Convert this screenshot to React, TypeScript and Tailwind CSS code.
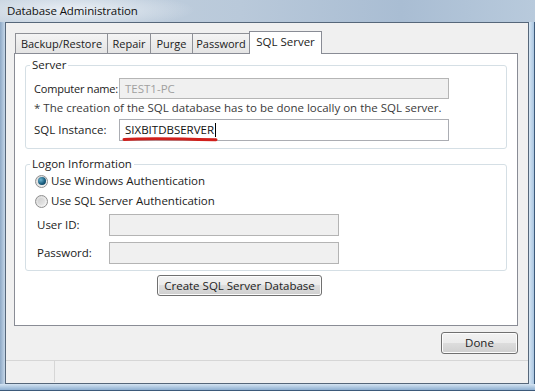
import React from "react";

function Radio({ checked }: { checked: boolean }) {
  return (
    <span className="relative w-[13px] h-[13px] rounded-full border border-[#8f8f8f] bg-[linear-gradient(135deg,#d8d8d8,#f6f6f6)] flex items-center justify-center shrink-0">
      {checked ? (
        <span className="w-[8px] h-[8px] rounded-full bg-[radial-gradient(circle_at_35%_35%,#6fb6d2,#1b5f80_55%,#0a3048)]" />
      ) : (
        <span className="w-[7px] h-[7px] rounded-full bg-[linear-gradient(135deg,#cfcfcf,#e9e9e9)]" />
      )}
    </span>
  );
}

function Tab({ label, w, selected, first }: { label: string; w: string; selected?: boolean; first?: boolean }) {
  if (selected) {
    return (
      <div
        className={`${w} h-[23px] -mb-px -ml-px relative z-10 bg-white border border-b-0 border-[#898c95] flex items-start justify-center pt-[2px] leading-[16px] whitespace-nowrap text-[11.5px]`}
      >
        {label}
      </div>
    );
  }
  return (
    <div
      className={`${w} h-[20px] ${first ? "" : "-ml-px"} border border-b-0 border-[#8e9096] bg-[linear-gradient(#f4f4f4,#e4e4e4)] flex items-center justify-center leading-[16px] pt-[1px] whitespace-nowrap text-[11px]`}
    >
      {label}
    </div>
  );
}

function VistaButton({ children, className }: { children: React.ReactNode; className: string }) {
  return (
    <div
      className={`${className} rounded-[3px] border border-[#707070] shadow-[inset_0_0_0_1px_#fcfcfc] bg-[linear-gradient(#f2f2f2,#ebebeb_50%,#dddddd_50%,#cfcfcf)] flex items-center justify-center leading-[16px] text-[#222] whitespace-nowrap`}
    >
      {children}
    </div>
  );
}

export default function App() {
  return (
    <div className="w-[535px] h-[391px] overflow-hidden flex flex-col font-['Open_Sans',sans-serif] text-[11.5px] leading-[16px] text-[#1b1b1b] bg-[#b3c6da]">
      {/* Title bar */}
      <div className="h-[22px] shrink-0 flex items-center pl-[7px] bg-[radial-gradient(ellipse_120px_18px_at_75px_10px,rgba(236,241,246,0.95),rgba(236,241,246,0)),linear-gradient(to_right,#c5d2df,#b9c9da_45%,#a9bdd3_75%,#b8cadc)]">
        <span className="text-[#111] text-[11.5px] tracking-[-0.1px] whitespace-nowrap">Database Administration</span>
      </div>

      <div className="h-[362px] flex shrink-0">
        {/* left frame */}
        <div className="w-[5px] bg-[linear-gradient(to_right,#8ea9c6,#c4d6e8)]" />

        {/* client */}
        <div className="w-[524px] border border-[#56677a] bg-[#f0f0f0] flex flex-col pt-[8px] pl-[8px] pr-[10px]">
          {/* tab strip */}
          <div className="h-[22px] flex items-end pl-[1px]">
            <Tab label="Backup/Restore" w="w-[93px]" first />
            <Tab label="Repair" w="w-[44px]" />
            <Tab label="Purge" w="w-[43px]" />
            <Tab label="Password" w="w-[58px]" />
            <Tab label="SQL Server" w="w-[73px]" selected />
          </div>

          {/* panel */}
          <div className="w-[504px] h-[273px] border border-[#898c95] bg-white flex flex-col px-[10px]">
            {/* Server group */}
            <fieldset className="mt-[4px] border border-[#d5dfe5] rounded-[3px] px-[8px] pb-[7px]">
              <legend className="ml-[-4px] px-[2px] leading-[14px]">Server</legend>
              <div className="mt-[6px] flex items-center h-[21px]">
                <span className="w-[85px] shrink-0 whitespace-nowrap text-[11px] tracking-[-0.2px]">Computer name:</span>
                <div className="w-[330px] h-[21px] border border-[#b5b5b5] bg-[#f0f0f0] flex items-center pl-[5px] text-[#a0a0a0]">
                  TEST1-PC
                </div>
              </div>
              <div className="mt-[1px] h-[16px] text-[#3a3a3a] whitespace-nowrap">
                * The creation of the SQL database has to be done locally on the SQL server.
              </div>
              <div className="mt-[3px] flex items-center h-[22px]">
                <span className="w-[85px] shrink-0 whitespace-nowrap">SQL Instance:</span>
                <div className="relative w-[330px] h-[22px] border border-[#abadb3] bg-white flex items-center pl-[5px] text-[#111]">
                  <span>SIXBITDBSERVER</span>
                  <span className="w-px h-[14px] bg-black ml-[1px]" />
                  <svg className="absolute left-[2px] top-[16px]" width="96" height="6" viewBox="0 0 96 6">
                    <path d="M2 3.5 C 20 2.2, 55 2.6, 94 3.8" stroke="#d0201c" strokeWidth="3" strokeLinecap="round" fill="none" />
                  </svg>
                </div>
              </div>
            </fieldset>

            {/* Logon group */}
            <fieldset className="mt-[8px] border border-[#d5dfe5] rounded-[3px] px-[8px] pb-[6px]">
              <legend className="ml-[-4px] px-[2px] leading-[14px]">Logon Information</legend>
              <div className="mt-[3px] h-[14px] flex items-center pl-[1px]">
                <Radio checked />
                <span className="ml-[3px] whitespace-nowrap">Use Windows Authentication</span>
              </div>
              <div className="mt-[6px] h-[14px] flex items-center pl-[1px]">
                <Radio checked={false} />
                <span className="ml-[3px] whitespace-nowrap">Use SQL Server Authentication</span>
              </div>
              <div className="mt-[6px] h-[22px] flex items-center pl-[3px]">
                <span className="w-[72px] shrink-0 whitespace-nowrap">User ID:</span>
                <div className="w-[230px] h-[22px] border border-[#b4b4b4] bg-[#f0f0f0]" />
              </div>
              <div className="mt-[6px] h-[22px] flex items-center pl-[3px]">
                <span className="w-[72px] shrink-0 whitespace-nowrap">Password:</span>
                <div className="w-[230px] h-[22px] border border-[#b4b4b4] bg-[#f0f0f0]" />
              </div>
            </fieldset>

            <VistaButton className="mt-[4px] ml-[132px] w-[165px] h-[21px]">Create SQL Server Database</VistaButton>
          </div>

          {/* Done */}
          <div className="mt-[6px] flex justify-end">
            <VistaButton className="w-[77px] h-[22px]">Done</VistaButton>
          </div>

          {/* status bar */}
          <div className="mt-[6px] h-[22px] -ml-[8px] -mr-[10px] border-t border-[#d6d6d6] flex">
            <div className="w-[49px] border-r border-[#d6d6d6]" />
            <div className="flex-1" />
          </div>
        </div>

        {/* right frame */}
        <div className="flex-1 border-r border-[#3d5a7a] bg-[linear-gradient(to_right,#d6e6f4,#a9c5e0)]" />
      </div>

      {/* bottom frame */}
      <div className="flex-1 border-b border-[#3d5a7a] bg-[linear-gradient(#d4e4f2,#8fb0d1)]" />
    </div>
  );
}
